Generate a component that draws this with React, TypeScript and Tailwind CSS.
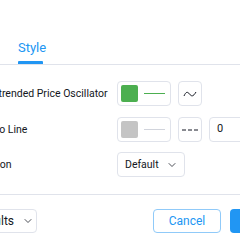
import React from 'react';
import { ChevronDown } from 'lucide-react';

const font = { fontFamily: 'Roboto, "Open Sans", sans-serif' };

const ColorSwatch: React.FC<{ color: string; line: string }> = ({ color, line }) => (
  <div className="w-[54px] h-[25px] border border-[#e0e3eb] rounded-[4px] flex items-center pl-[3px] gap-[6px]">
    <div className="w-[17px] h-[17px] rounded-[2px]" style={{ backgroundColor: color }} />
    <div className="w-[21px] h-px" style={{ backgroundColor: line }} />
  </div>
);

const IconBox: React.FC<{ children: React.ReactNode }> = ({ children }) => (
  <div className="w-[24px] h-[25px] border border-[#e0e3eb] rounded-[4px] flex items-center justify-center text-[#131722]">
    {children}
  </div>
);

const App: React.FC = () => {
  return (
    <div className="w-[240px] h-[240px] overflow-hidden bg-white text-[#131722]" style={font}>
      <div className="-ml-[16px] w-[300px]">
        {/* Tabs */}
        <div className="pt-[41px] border-b border-[#e0e3eb] pl-[34px] flex">
          <div className="flex flex-col">
            <span className="text-[13px] leading-[14px] text-[#2196f3]">Style</span>
            <div className="mt-[6px] h-[3px] bg-[#2196f3] rounded-t-[1px] w-[25px]" />
          </div>
        </div>

        {/* Rows */}
        <div className="pt-[16px] flex flex-col gap-[11px]">
          <div className="flex items-center">
            <span className="w-[131px] ml-[2px] text-[10.5px] whitespace-nowrap">Detrended Price Oscillator</span>
            <div className="flex items-center gap-[7px]">
              <ColorSwatch color="#4caf50" line="#4caf50" />
              <IconBox>
                <svg width="14" height="8" viewBox="0 0 14 8" fill="none" stroke="currentColor" strokeWidth="1">
                  <path d="M1 6 C3 1.5 4.5 1.5 6.5 4 S10 7 13 2" />
                </svg>
              </IconBox>
            </div>
          </div>

          <div className="flex items-center">
            <span className="w-[133px] text-[10.5px] whitespace-nowrap">Zero Line</span>
            <div className="flex items-center gap-[7px]">
              <ColorSwatch color="#c4c4c4" line="#d1d4dc" />
              <IconBox>
                <svg width="16" height="2" viewBox="0 0 16 2" stroke="currentColor" strokeWidth="1">
                  <path d="M0 1 H4 M6 1 H10 M12 1 H16" />
                </svg>
              </IconBox>
              <div className="w-[60px] h-[25px] border border-[#e0e3eb] rounded-[4px] flex items-center pl-[7px] text-[11px]">
                0
              </div>
            </div>
          </div>

          <div className="flex items-center mt-[-1px]">
            <span className="w-[149px] -ml-[16px] text-[10.5px] whitespace-nowrap">Precision</span>
            <div className="w-[68px] h-[25px] border border-[#e0e3eb] rounded-[4px] flex items-center justify-between pl-[7px] pr-[6px] text-[10.5px]">
              <span>Default</span>
              <ChevronDown size={12} strokeWidth={1.5} />
            </div>
          </div>
        </div>

        {/* Footer */}
        <div className="mt-[17px] border-t border-[#e0e3eb] pt-[14px] flex items-center">
          <div className="w-[80px] h-[24px] border border-[#e0e3eb] rounded-[4px] flex items-center justify-end gap-[8px] pr-[2px] text-[12px] -ml-[27px]">
            <span>Defaults</span>
            <ChevronDown size={12} strokeWidth={1.5} />
          </div>
          <div className="ml-[116px] flex gap-[9px]">
            <button className="w-[68px] h-[24px] border border-[#90caf9] rounded-[4px] text-[12px] text-[#2196f3]">
              Cancel
            </button>
            <button className="w-[50px] h-[24px] rounded-[4px] bg-[#2196f3] text-[12px] text-white">
              Ok
            </button>
          </div>
        </div>
      </div>
    </div>
  );
};

export default App;
